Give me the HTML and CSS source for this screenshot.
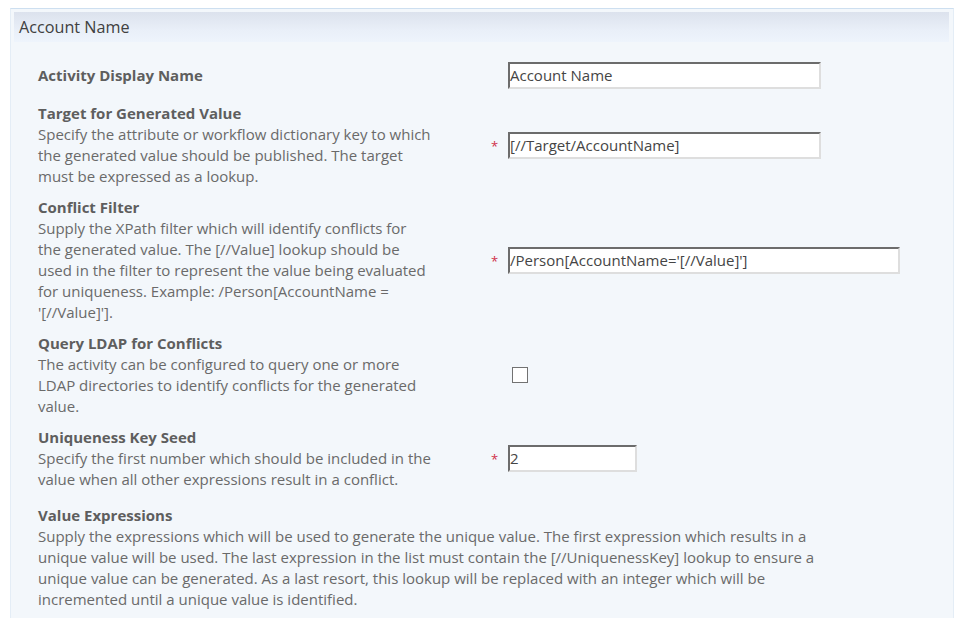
FILE: index.html
```html
<!DOCTYPE html>
<html>
<head>
<meta charset="utf-8">
<link rel="stylesheet" href="styles.css">
</head>
<body>
<div class="panel">
  <div class="header">Account Name</div>
  <div class="content">
    <div class="row first">
      <div class="text"><div class="label">Activity Display Name</div></div>
      <div class="req"></div>
      <div class="field"><div class="input w313">Account Name</div></div>
    </div>
    <div class="row">
      <div class="text">
        <div class="label">Target for Generated Value</div>
        <div class="desc">Specify the attribute or workflow dictionary key to which<br>the generated value should be published. The target<br>must be expressed as a lookup.</div>
      </div>
      <div class="req">*</div>
      <div class="field"><div class="input w313">[//Target/AccountName]</div></div>
    </div>
    <div class="row">
      <div class="text">
        <div class="label">Conflict Filter</div>
        <div class="desc">Supply the XPath filter which will identify conflicts for<br>the generated value. The [//Value] lookup should be<br>used in the filter to represent the value being evaluated<br>for uniqueness. Example: /Person[AccountName =<br>'[//Value]'].</div>
      </div>
      <div class="req">*</div>
      <div class="field"><div class="input w392">/Person[AccountName='[//Value]']</div></div>
    </div>
    <div class="row">
      <div class="text">
        <div class="label">Query LDAP for Conflicts</div>
        <div class="desc">The activity can be configured to query one or more<br>LDAP directories to identify conflicts for the generated<br>value.</div>
      </div>
      <div class="req"></div>
      <div class="field"><span class="checkbox"></span></div>
    </div>
    <div class="row">
      <div class="text">
        <div class="label">Uniqueness Key Seed</div>
        <div class="desc">Specify the first number which should be included in the<br>value when all other expressions result in a conflict.</div>
      </div>
      <div class="req">*</div>
      <div class="field"><div class="input w129">2</div></div>
    </div>
    <div class="row full">
      <div class="text wide">
        <div class="label">Value Expressions</div>
        <div class="desc">Supply the expressions which will be used to generate the unique value. The first expression which results in a<br>unique value will be used. The last expression in the list must contain the [//UniquenessKey] lookup to ensure a<br>unique value can be generated. As a last resort, this lookup will be replaced with an integer which will be<br>incremented until a unique value is identified.</div>
      </div>
    </div>
  </div>
</div>
</body>
</html>
```
FILE: styles.css
```css
html, body {
  margin: 0;
  padding: 0;
  background: #ffffff;
  font-family: "Open Sans", "Noto Sans", sans-serif;
}
.panel {
  margin: 8px 10px 0 10px;
  border-top: 1px solid #cddff0;
  border-left: 1px solid #e4edf6;
  border-right: 1px solid #e4edf6;
  background: #f3f7fb;
  padding: 3px 4px 0 3px;
  height: 620px;
  box-sizing: border-box;
}
.header {
  height: 30px;
  line-height: 30px;
  padding-left: 5px;
  font-size: 16.2px;
  color: #404040;
  background: linear-gradient(#dce2ed, #e9eff8 60%, #eef4fc);
}
.content {
  padding: 20px 0 0 24px;
}
.row {
  display: grid;
  grid-template-columns: 453px 17px 1fr;
  align-items: center;
  margin-bottom: 10px;
}
.row.first {
  margin-bottom: 14px;
}
.row.full {
  display: block;
  margin-top: 15px;
}
.text {
  white-space: nowrap;
  font-size: 15px;
  line-height: 21px;
  color: #6a6a6a;
}
.label {
  font-weight: bold;
  color: #5e5e5e;
}
.req {
  color: #d0304a;
  font-size: 13px;
  line-height: 13px;
  align-self: center;
  margin-top: 2px;
}
.field {
  display: flex;
  align-items: center;
}
.input {
  box-sizing: border-box;
  height: 27px;
  line-height: 23px;
  background: #ffffff;
  border-top: 2px solid #6c6c6c;
  border-left: 2px solid #6c6c6c;
  border-right: 2px solid #dedede;
  border-bottom: 2px solid #dedede;
  font-size: 15px;
  color: #454545;
  padding: 0 0 0 0;
  white-space: nowrap;
}
.w313 { width: 313px; }
.w392 { width: 392px; }
.w129 { width: 129px; }
.checkbox {
  display: block;
  width: 16px;
  height: 16px;
  box-sizing: border-box;
  border: 1px solid #727272;
  background: #ffffff;
  margin-left: 4px;
}
```
